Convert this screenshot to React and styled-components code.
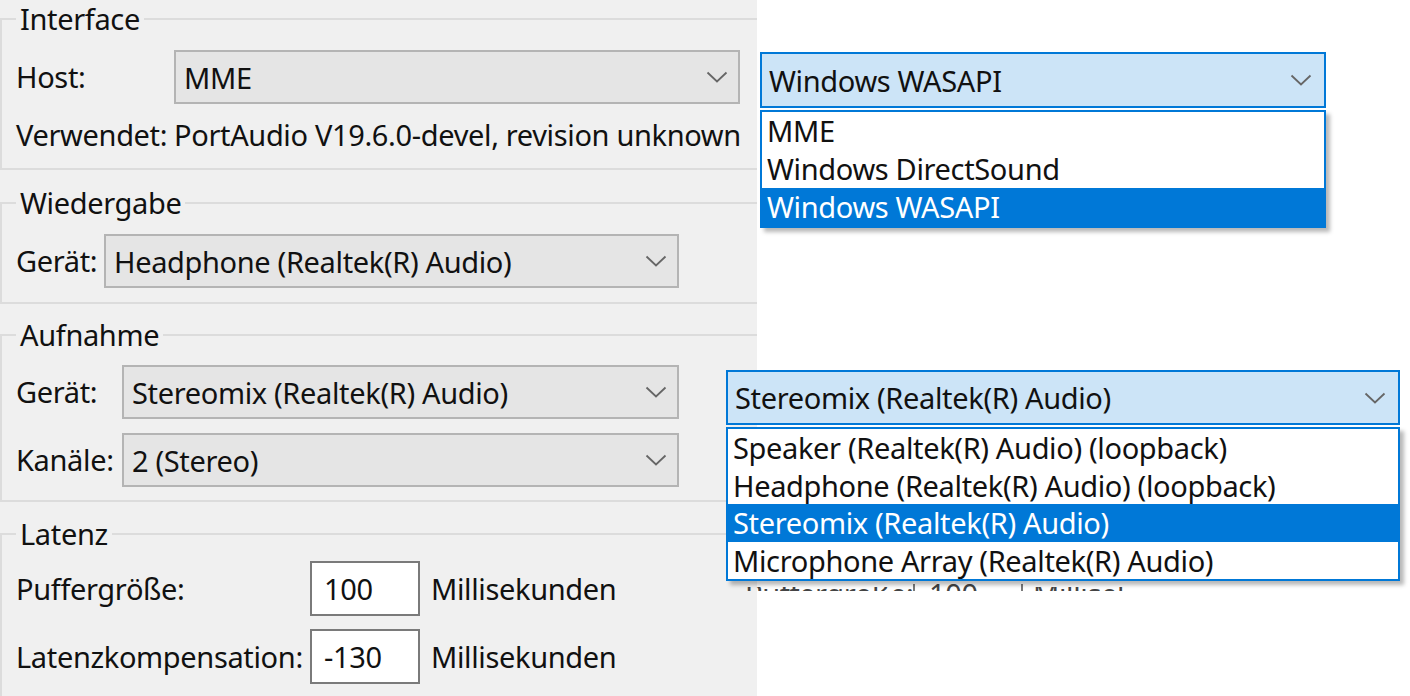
import React from 'react';
import styled, { createGlobalStyle } from 'styled-components';

const GlobalStyle = createGlobalStyle`
  html, body {
    margin: 0;
    padding: 0;
    background: #fff;
  }
  body {
    font-family: "Noto Sans", "Open Sans", sans-serif;
    font-size: 29px;
    letter-spacing: -0.35px;
    color: #111;
  }
`;

const hostOptions = ['MME', 'Windows DirectSound', 'Windows WASAPI'];
const recOptions = [
  'Speaker (Realtek(R) Audio) (loopback)',
  'Headphone (Realtek(R) Audio) (loopback)',
  'Stereomix (Realtek(R) Audio)',
  'Microphone Array (Realtek(R) Audio)',
];

const Chevron = () => (
  <svg width="22" height="12" viewBox="0 0 22 12">
    <polyline points="1.5,1.5 11,10.5 20.5,1.5" fill="none" stroke="#666" strokeWidth="1.8" />
  </svg>
);

const App = () => {
  return (
    <>
      <GlobalStyle />
      <Page>
        <Panel>
          <Group $gap={0} $padTop={12} $padBottom={14}>
            <Legend>Interface</Legend>
            <FormGrid $cols="146px 566px" $colGap={12} $rowGap={12}>
              <Label>Host:</Label>
              <Combo>
                <span>MME</span>
                <Chevron />
              </Combo>
              <Label>Verwendet:</Label>
              <Label>PortAudio V19.6.0-devel, revision unknown</Label>
            </FormGrid>
          </Group>

          <Group $gap={14} $padTop={12} $padBottom={14}>
            <Legend>Wiedergabe</Legend>
            <FormGrid $cols="76px 575px" $colGap={12} $rowGap={14}>
              <Label>Gerät:</Label>
              <Combo>
                <span>Headphone (Realtek(R) Audio)</span>
                <Chevron />
              </Combo>
            </FormGrid>
          </Group>

          <Group $gap={12} $padTop={11} $padBottom={13}>
            <Legend>Aufnahme</Legend>
            <FormGrid $cols="96px 557px" $colGap={10} $rowGap={14}>
              <Label>Gerät:</Label>
              <Combo>
                <span>Stereomix (Realtek(R) Audio)</span>
                <Chevron />
              </Combo>
              <Label>Kanäle:</Label>
              <Combo>
                <span>2 (Stereo)</span>
                <Chevron />
              </Combo>
            </FormGrid>
          </Group>

          <Group $gap={13} $padTop={8} $padBottom={20}>
            <Legend>Latenz</Legend>
            <FormGrid $cols="283px 110px auto" $colGap={11} $rowGap={13}>
              <Label>Puffergröße:</Label>
              <NumberBox>100</NumberBox>
              <Label>Millisekunden</Label>
              <Label>Latenzkompensation:</Label>
              <NumberBox>-130</NumberBox>
              <Label>Millisekunden</Label>
            </FormGrid>
          </Group>
        </Panel>

        <Dropdown $x={760} $y={52} $w={566}>
          <DropCombo $h={56}>
            <span>Windows WASAPI</span>
            <Chevron />
          </DropCombo>
          <DropList>
            {hostOptions.map((o) => (
              <DropItem key={o} $h={38} $selected={o === 'Windows WASAPI'}>{o}</DropItem>
            ))}
          </DropList>
        </Dropdown>

        {/* tops of a row from another capture peeking out below the list */}
        <Remnant>
          <RemnantLabel $w={168}>Puffergröße:</RemnantLabel>
          <RemnantBox>100</RemnantBox>
          <RemnantLabel $w={110} $pad={10}>Millisekunden</RemnantLabel>
        </Remnant>

        <Dropdown $x={726} $y={370} $w={674}>
          <DropCombo $h={55}>
            <span>Stereomix (Realtek(R) Audio)</span>
            <Chevron />
          </DropCombo>
          <DropList>
            {recOptions.map((o) => (
              <DropItem key={o} $h={37.5} $selected={o === 'Stereomix (Realtek(R) Audio)'}>{o}</DropItem>
            ))}
          </DropList>
        </Dropdown>
      </Page>
    </>
  );
};

const Page = styled.div`
  position: relative;
  width: 1410px;
  height: 696px;
  overflow: hidden;
  background: #fff;
`;

const Panel = styled.div`
  width: 757px;
  height: 696px;
  background: #f0f0f0;
  overflow: hidden;
  display: flex;
  flex-direction: column;
`;

const Group = styled.fieldset`
  margin: ${({ $gap }) => $gap}px -20px 0 0;
  padding: ${({ $padTop }) => $padTop}px 14px ${({ $padBottom }) => $padBottom}px;
  border: 2px solid #dcdcdc;
  min-width: 0;
  flex-shrink: 0;
`;

const Legend = styled.legend`
  padding: 0 4px;
  line-height: 38px;
`;

const FormGrid = styled.div`
  display: grid;
  grid-template-columns: ${({ $cols }) => $cols};
  column-gap: ${({ $colGap }) => $colGap}px;
  row-gap: ${({ $rowGap }) => $rowGap}px;
  align-items: center;
`;

const Label = styled.span`
  line-height: 38px;
  white-space: nowrap;
`;

const Combo = styled.div`
  display: flex;
  align-items: center;
  justify-content: space-between;
  height: 54px;
  box-sizing: border-box;
  padding: 0 10px 0 8px;
  background: #e5e5e5;
  border: 2px solid #b4b4b4;
  white-space: nowrap;
`;

const NumberBox = styled.div`
  display: flex;
  align-items: center;
  height: 55px;
  box-sizing: border-box;
  padding-left: 12px;
  background: #fff;
  border: 2px solid #7a7a7a;
`;

const Dropdown = styled.div`
  position: absolute;
  left: ${({ $x }) => $x}px;
  top: ${({ $y }) => $y}px;
  width: ${({ $w }) => $w}px;
`;

const DropCombo = styled.div`
  display: flex;
  align-items: center;
  justify-content: space-between;
  height: ${({ $h }) => $h}px;
  box-sizing: border-box;
  padding: 0 12px 0 7px;
  background: #cce4f7;
  border: 2px solid #0078d7;
  white-space: nowrap;
`;

const DropList = styled.div`
  margin-top: 2px;
  background: #fff;
  border: 2px solid #0078d7;
  box-shadow: 4px 4px 4px rgba(0, 0, 0, 0.28);
`;

const DropItem = styled.div`
  height: ${({ $h }) => $h}px;
  line-height: ${({ $h }) => $h}px;
  padding-left: 5px;
  white-space: nowrap;
  background: ${({ $selected }) => ($selected ? '#0078d7' : '#fff')};
  color: ${({ $selected }) => ($selected ? '#fff' : '#111')};
`;

const Remnant = styled.div`
  position: absolute;
  left: 745px;
  top: 584px;
  width: 380px;
  height: 7px;
  overflow: hidden;
  display: flex;
  align-items: flex-start;
`;

const RemnantLabel = styled.span`
  margin-top: 3px;
  width: ${({ $w }) => $w}px;
  padding-left: ${({ $pad }) => $pad || 0}px;
  flex-shrink: 0;
  overflow: hidden;
  line-height: 14px;
  color: #444;
  white-space: nowrap;
`;

const RemnantBox = styled.span`
  margin-top: 0;
  width: 110px;
  height: 20px;
  flex-shrink: 0;
  box-sizing: border-box;
  padding-left: 14px;
  padding-top: 3px;
  border-left: 2px solid #7a7a7a;
  border-right: 2px solid #7a7a7a;
  line-height: 14px;
  color: #444;
`;

export default App;
